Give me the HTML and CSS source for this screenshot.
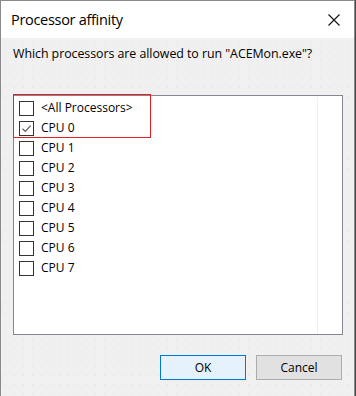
FILE: index.html
```html
<!DOCTYPE html>
<html>
<head>
<meta charset="utf-8">
<link rel="stylesheet" href="styles.css">
</head>
<body>
<div class="window">
  <div class="titlebar">
    <span class="title">Processor affinity</span>
    <span class="close">
      <svg width="12" height="12" viewBox="0 0 12 12"><path d="M0.5 0.5 L11.5 11.5 M11.5 0.5 L0.5 11.5" stroke="#111" stroke-width="1.1" fill="none"/></svg>
    </span>
  </div>
  <div class="content">
    <p class="prompt">Which processors are allowed to run "ACEMon.exe"?</p>
    <div class="listbox">
      <div class="column">
        <div class="row"><span class="box"></span><span class="label">&lt;All Processors&gt;</span></div>
        <div class="row"><span class="box"><svg width="13" height="13" viewBox="0 0 13 13"><path d="M2.5 6.8 L5.3 9.5 L10.6 3.6" stroke="#5a5a5a" stroke-width="1.2" fill="none"/></svg></span><span class="label">CPU 0</span></div>
        <div class="row"><span class="box"></span><span class="label">CPU 1</span></div>
        <div class="row"><span class="box"></span><span class="label">CPU 2</span></div>
        <div class="row"><span class="box"></span><span class="label">CPU 3</span></div>
        <div class="row"><span class="box"></span><span class="label">CPU 4</span></div>
        <div class="row"><span class="box"></span><span class="label">CPU 5</span></div>
        <div class="row"><span class="box"></span><span class="label">CPU 6</span></div>
        <div class="row"><span class="box"></span><span class="label">CPU 7</span></div>
      </div>
    </div>
    <div class="buttons">
      <button class="btn btn-default">OK</button>
      <button class="btn">Cancel</button>
    </div>
    <div class="highlight"></div>
  </div>
</div>
</body>
</html>
```

FILE: styles.css
```css
html, body {
  margin: 0;
  padding: 0;
}
body {
  width: 356px;
  height: 396px;
  background: #4a4a4a;
  overflow: hidden;
  font-family: "Open Sans", "Noto Sans", sans-serif;
  color: #000;
}
.window {
  box-sizing: border-box;
  width: 355px;
  height: 396px;
  border: 1px solid #8a8a8a;
  border-bottom: none;
  background: #f0f0f0;
  display: flex;
  flex-direction: column;
}
.titlebar {
  height: 37px;
  background: #fff;
  display: flex;
  align-items: center;
  justify-content: space-between;
  padding: 0 14px 0 10px;
  flex: none;
}
.title {
  font-size: 14.5px;
  color: #000;
  letter-spacing: -0.3px;
}
.close {
  display: flex;
  width: 12px;
  height: 12px;
  margin-top: 1px;
}
.content {
  position: relative;
  flex: 1;
  padding: 0 12px 0 12px;
  background-color: #f0f0f0;
  background-image: radial-gradient(circle, #dedede 0.7px, transparent 1px);
  background-size: 9px 9px;
}
.prompt {
  margin: 7px 0 0 0;
  font-size: 12.4px;
  line-height: 17px;
  height: 17px;
  letter-spacing: -0.05px;
}
.listbox {
  box-sizing: border-box;
  margin-top: 33px;
  width: 330px;
  height: 240px;
  border: 1px solid #828790;
  background: #fff;
  display: flex;
}
.column {
  width: 304px;
  border-right: 1px solid #e5f1fb;
  padding-top: 1px;
  box-sizing: border-box;
  height: 237px;
  margin-top: 1px;
}
.row {
  height: 20px;
  display: flex;
  align-items: center;
  padding-left: 5px;
}
.box {
  box-sizing: border-box;
  width: 15px;
  height: 15px;
  border: 1px solid #333;
  background: #fff;
  display: flex;
  align-items: center;
  justify-content: center;
  flex: none;
}
.label {
  margin-left: 7px;
  font-size: 12px;
  line-height: 16px;
}
.buttons {
  display: flex;
  justify-content: flex-end;
  gap: 10px;
  margin-top: 20px;
}
.btn {
  box-sizing: border-box;
  width: 86px;
  height: 25px;
  font-family: "Open Sans", "Noto Sans", sans-serif;
  font-size: 12px;
  background: #e1e1e1;
  border: 1px solid #adadad;
  color: #000;
  padding: 0;
}
.btn-default {
  background: #e5f1fb;
  border: 1px solid #0078d7;
}
.highlight {
  position: absolute;
  left: 12px;
  top: 56px;
  width: 138px;
  height: 44px;
  border: 1px solid #e81e25;
  box-sizing: border-box;
}
```
